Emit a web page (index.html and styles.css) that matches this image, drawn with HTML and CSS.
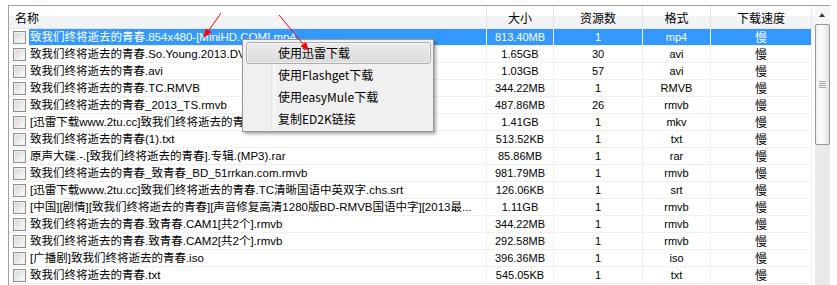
FILE: index.html
```html
<!DOCTYPE html>
<html lang="zh-CN">
<head>
  <meta charset="UTF-8" />
  <title>资源列表</title>
  <link rel="stylesheet" href="styles.css">
</head>
<body>

<div class="listview">
  <div class="grid">
    <div class="row head">
      <div class="cell name">名称</div>
      <div class="cell">大小</div>
      <div class="cell">资源数</div>
      <div class="cell">格式</div>
      <div class="cell">下载速度</div>
      <div class="cell filler"></div>
    </div>

    <div class="row selected">
      <div class="cell name"><span class="check"></span><span class="label">致我们终将逝去的青春.854x480-[MiniHD.COM].mp4</span></div>
      <div class="cell num">813.40MB</div>
      <div class="cell num">1</div>
      <div class="cell num">mp4</div>
      <div class="cell speed">慢</div>
      <div class="cell filler"></div>
    </div>
    <div class="row">
      <div class="cell name"><span class="check"></span><span class="label">致我们终将逝去的青春.So.Young.2013.DVDScr.avi</span></div>
      <div class="cell num">1.65GB</div>
      <div class="cell num">30</div>
      <div class="cell num">avi</div>
      <div class="cell speed">慢</div>
      <div class="cell filler"></div>
    </div>
    <div class="row">
      <div class="cell name"><span class="check"></span><span class="label">致我们终将逝去的青春.avi</span></div>
      <div class="cell num">1.03GB</div>
      <div class="cell num">57</div>
      <div class="cell num">avi</div>
      <div class="cell speed">慢</div>
      <div class="cell filler"></div>
    </div>
    <div class="row">
      <div class="cell name"><span class="check"></span><span class="label">致我们终将逝去的青春.TC.RMVB</span></div>
      <div class="cell num">344.22MB</div>
      <div class="cell num">1</div>
      <div class="cell num">RMVB</div>
      <div class="cell speed">慢</div>
      <div class="cell filler"></div>
    </div>
    <div class="row">
      <div class="cell name"><span class="check"></span><span class="label">致我们终将逝去的青春_2013_TS.rmvb</span></div>
      <div class="cell num">487.86MB</div>
      <div class="cell num">26</div>
      <div class="cell num">rmvb</div>
      <div class="cell speed">慢</div>
      <div class="cell filler"></div>
    </div>
    <div class="row">
      <div class="cell name"><span class="check"></span><span class="label">[迅雷下载www.2tu.cc]致我们终将逝去的青春.BD.mkv</span></div>
      <div class="cell num">1.41GB</div>
      <div class="cell num">1</div>
      <div class="cell num">mkv</div>
      <div class="cell speed">慢</div>
      <div class="cell filler"></div>
    </div>
    <div class="row">
      <div class="cell name"><span class="check"></span><span class="label">致我们终将逝去的青春(1).txt</span></div>
      <div class="cell num">513.52KB</div>
      <div class="cell num">1</div>
      <div class="cell num">txt</div>
      <div class="cell speed">慢</div>
      <div class="cell filler"></div>
    </div>
    <div class="row">
      <div class="cell name"><span class="check"></span><span class="label">原声大碟.-.[致我们终将逝去的青春].专辑.(MP3).rar</span></div>
      <div class="cell num">85.86MB</div>
      <div class="cell num">1</div>
      <div class="cell num">rar</div>
      <div class="cell speed">慢</div>
      <div class="cell filler"></div>
    </div>
    <div class="row">
      <div class="cell name"><span class="check"></span><span class="label">致我们终将逝去的青春_致青春_BD_51rrkan.com.rmvb</span></div>
      <div class="cell num">981.79MB</div>
      <div class="cell num">1</div>
      <div class="cell num">rmvb</div>
      <div class="cell speed">慢</div>
      <div class="cell filler"></div>
    </div>
    <div class="row">
      <div class="cell name"><span class="check"></span><span class="label">[迅雷下载www.2tu.cc]致我们终将逝去的青春.TC清晰国语中英双字.chs.srt</span></div>
      <div class="cell num">126.06KB</div>
      <div class="cell num">1</div>
      <div class="cell num">srt</div>
      <div class="cell speed">慢</div>
      <div class="cell filler"></div>
    </div>
    <div class="row">
      <div class="cell name"><span class="check"></span><span class="label">[中国][剧情][致我们终将逝去的青春][声音修复高清1280版BD-RMVB国语中字][2013最...</span></div>
      <div class="cell num">1.11GB</div>
      <div class="cell num">1</div>
      <div class="cell num">rmvb</div>
      <div class="cell speed">慢</div>
      <div class="cell filler"></div>
    </div>
    <div class="row">
      <div class="cell name"><span class="check"></span><span class="label">致我们终将逝去的青春.致青春.CAM1[共2个].rmvb</span></div>
      <div class="cell num">344.22MB</div>
      <div class="cell num">1</div>
      <div class="cell num">rmvb</div>
      <div class="cell speed">慢</div>
      <div class="cell filler"></div>
    </div>
    <div class="row">
      <div class="cell name"><span class="check"></span><span class="label">致我们终将逝去的青春.致青春.CAM2[共2个].rmvb</span></div>
      <div class="cell num">292.58MB</div>
      <div class="cell num">1</div>
      <div class="cell num">rmvb</div>
      <div class="cell speed">慢</div>
      <div class="cell filler"></div>
    </div>
    <div class="row">
      <div class="cell name"><span class="check"></span><span class="label">[广播剧]致我们终将逝去的青春.iso</span></div>
      <div class="cell num">396.36MB</div>
      <div class="cell num">1</div>
      <div class="cell num">iso</div>
      <div class="cell speed">慢</div>
      <div class="cell filler"></div>
    </div>
    <div class="row">
      <div class="cell name"><span class="check"></span><span class="label">致我们终将逝去的青春.txt</span></div>
      <div class="cell num">545.05KB</div>
      <div class="cell num">1</div>
      <div class="cell num">txt</div>
      <div class="cell speed">慢</div>
      <div class="cell filler"></div>
    </div>
  </div>

  <div class="vscroll">
    <div class="scroll-up"></div>
    <div class="thumb"><span class="grip"></span></div>
  </div>

  <!-- right-click menu -->
  <div class="menu">
    <div class="menu-item hot">使用迅雷下载</div>
    <div class="menu-item">使用Flashget下载</div>
    <div class="menu-item">使用easyMule下载</div>
    <div class="menu-item">复制ED2K链接</div>
  </div>
</div>

<svg class="marks" width="837" height="285" viewBox="0 0 837 285">
  <line x1="221" y1="13" x2="208.7" y2="30.6" stroke="#ff0000" stroke-width="1" />
  <polygon points="203.5,38 211.6,32.6 205.8,28.6" fill="#ff0000" />
  <line x1="279" y1="15" x2="303.2" y2="44.1" stroke="#ff0000" stroke-width="1" />
  <polygon points="309,51 300.5,46.3 305.9,41.9" fill="#ff0000" />
</svg>

</body>
</html>
```

FILE: styles.css
```css
* {
  box-sizing: border-box;
}

html {
  background: #fff;
}

body {
  margin: 0;
  height: 285px;
  position: relative;
  overflow: hidden;
  font-family: "Liberation Sans", "Noto Sans CJK SC", sans-serif;
  font-size: 12px;
  color: #000;
}

.listview {
  position: relative;
  display: flex;
  width: 822px;
  height: 280px;
  margin: 5px 0 0 8px;
  border-top: 1px solid #a0a0a0;
  border-left: 1px solid #a0a0a0;
  overflow: hidden;
}

.grid {
  width: 806px;
  flex: none;
}

.row {
  display: grid;
  grid-template-columns: 478px 67px 89px 68px 101px 3px;
  height: 17px;
}

.cell {
  border-right: 1px solid #f0f0f0;
  border-bottom: 1px solid #f0f0f0;
  text-align: center;
  line-height: 16px;
  white-space: nowrap;
  overflow: hidden;
}

.cell.filler {
  border: none;
}

/* header */
.row.head {
  height: 23px;
}

.head .cell {
  padding-top: 2px;
  line-height: 20px;
  font-family: "Noto Sans CJK SC", sans-serif;
  border-right-color: #e3e4e6;
  border-bottom-color: #e5e5e5;
  background: linear-gradient(#ffffff 0, #ffffff 45%, #f3f4f6 46%, #f1f2f4 100%);
}

.head .cell.name {
  padding-left: 6px;
  text-align: left;
}

.head .cell.filler {
  border-bottom: 1px solid #e5e5e5;
}

/* body cells */
.cell.name {
  display: flex;
  align-items: center;
  padding-left: 4px;
  text-align: left;
}

.check {
  flex: none;
  width: 13px;
  height: 13px;
  margin-right: 3px;
  border: 1px solid #8e8f8f;
  background: linear-gradient(135deg, #d3d3d3, #f8f8f8 85%);
  box-shadow: inset 0 0 0 1px #f0f0f0;
}

.label {
  flex: 1;
  min-width: 0;
  height: 16px;
  padding-left: 1px;
  overflow: hidden;
  text-overflow: ellipsis;
  font-size: 11.5px;
}

.num {
  font-size: 11px;
}

.speed {
  font-family: "Noto Sans CJK SC", sans-serif;
}

.row.selected .label,
.row.selected .num,
.row.selected .speed {
  background: #3399ff;
  color: #fff;
}

/* scrollbar */
.vscroll {
  flex: none;
  width: 15px;
  background: #e9e9e9;
  display: flex;
  flex-direction: column;
}

.scroll-up {
  position: relative;
  height: 18px;
  background: #f6f6f6;
}

.scroll-up::after {
  content: "";
  position: absolute;
  left: 4px;
  top: 7px;
  border-left: 3.5px solid transparent;
  border-right: 3.5px solid transparent;
  border-bottom: 4px solid #3a3a3a;
}

.thumb {
  height: 121px;
  display: flex;
  align-items: center;
  justify-content: center;
  border: 1px solid #979797;
  border-radius: 2px;
  background: linear-gradient(to right, #efefef, #fbfbfb 35%, #f2f2f2 70%, #e1e1e1);
}

.grip {
  width: 7px;
  height: 7px;
  background: repeating-linear-gradient(#a9a9a9 0 1px, #f6f6f6 1px 2px);
}

/* context menu */
.menu {
  position: absolute;
  left: 233px;
  top: 33px;
  width: 192px;
  padding: 2px 2px 1px 3px;
  background: #f0f0f0;
  border: 1px solid #979797;
  box-shadow: 2px 2px 3px rgba(0, 0, 0, 0.35);
  font-family: "Noto Sans CJK SC", sans-serif;
  font-size: 12px;
}

.menu::before {
  content: "";
  position: absolute;
  top: 2px;
  bottom: 2px;
  left: 28px;
  width: 2px;
  border-left: 1px solid #e2e3e3;
  border-right: 1px solid #fff;
}

.menu-item {
  position: relative;
  height: 22px;
  line-height: 20px;
  padding-left: 31px;
  border: 1px solid transparent;
  border-radius: 3px;
}

.menu-item.hot {
  background: linear-gradient(#ebebeb, #dcdcdc);
  border-color: #aeaeae;
  box-shadow: inset 0 0 0 1px rgba(255, 255, 255, 0.5);
}

.marks {
  position: absolute;
  left: 0;
  top: 0;
  pointer-events: none;
}
```
